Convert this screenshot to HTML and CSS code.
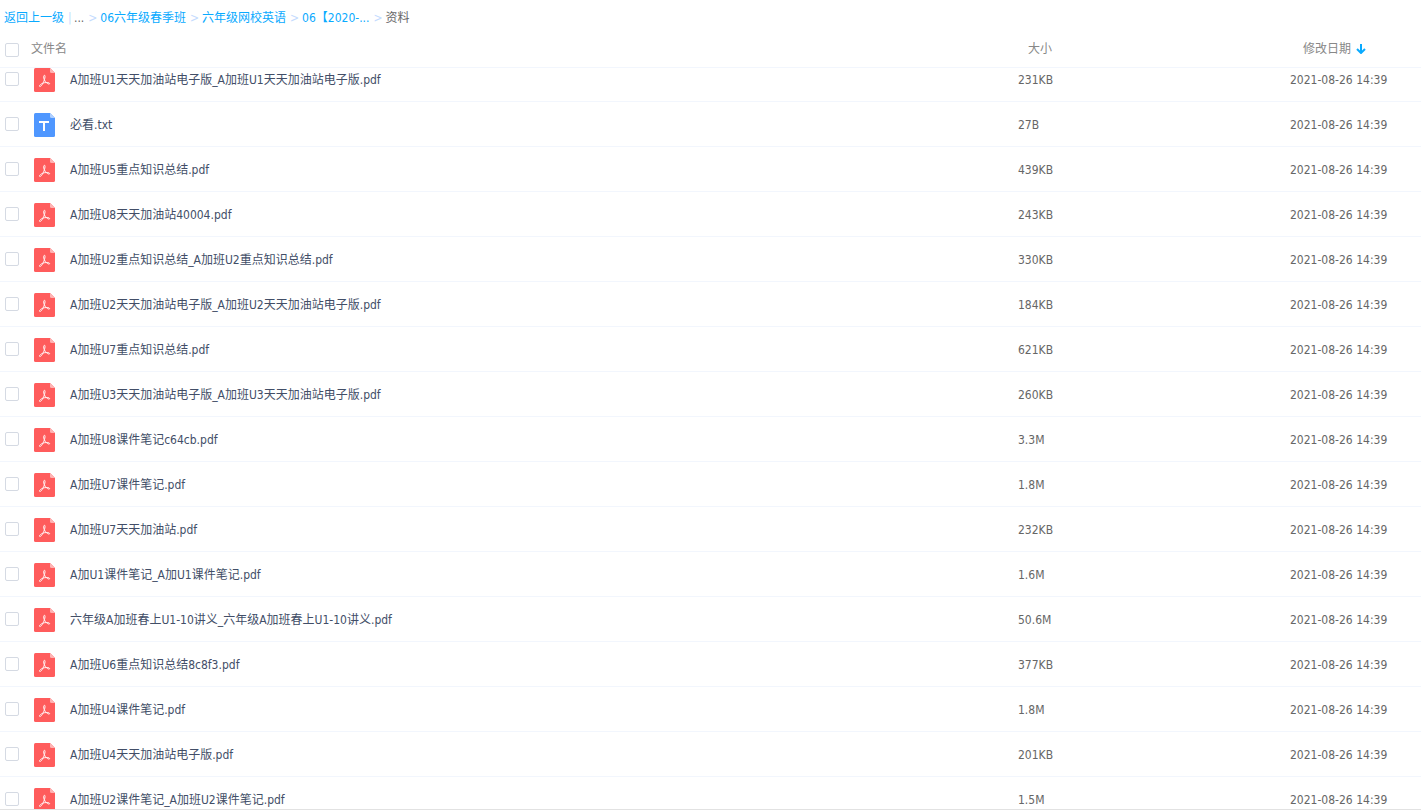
FILE: index.html
```html
<!DOCTYPE html>
<html lang="zh-CN">
<head>
<meta charset="utf-8">
<title>资料</title>
<link rel="stylesheet" href="styles.css">
</head>
<body>
<svg class="sprite" aria-hidden="true">
  <symbol id="pdf" viewBox="0 0 21 24">
    <path d="M1.500 0H16L21 5V22.500Q21 24 19.500 24H1.500Q0 24 0 22.500V1.500Q0 0 1.500 0Z" fill="#ff5c5c"/>
    <path d="M16 0L21 5H17.500Q16 5 16 3.500Z" fill="#ffb4b4"/>
    <path d="M10 7.500C11.500 6.500 11.200 9.500 10.300 12C9.300 15 7.500 18.500 5.900 18.500C4.500 18.300 6.500 15.900 9.200 15C12 14.200 15.800 14.400 15.600 15.700C15.300 16.900 12.500 15.300 11 13C9.900 11.300 9 8.300 10 7.500Z" fill="none" stroke="#fff" stroke-width="0.900"/>
  </symbol>
  <symbol id="txt" viewBox="0 0 21 24">
    <path d="M1.500 0H16L21 5V22.500Q21 24 19.500 24H1.500Q0 24 0 22.500V1.500Q0 0 1.500 0Z" fill="#4f97ff"/>
    <path d="M16 0L21 5H17.500Q16 5 16 3.500Z" fill="#b0d0ff"/>
    <path d="M5 8H15V10H11V18H9V10H5Z" fill="#fff"/>
  </symbol>
</svg>
<main class="page">
  <nav class="crumbs">
    <a href="#">返回上一级</a><span class="bar">|</span><span>...</span><span class="sep">&gt;</span><a href="#">06六年级春季班</a><span class="sep">&gt;</span><a href="#">六年级网校英语</a><span class="sep">&gt;</span><a href="#">06【2020-...</a><span class="sep">&gt;</span><span>资料</span>
  </nav>
  <div class="list">
    <table class="files">
      <colgroup><col class="col-check"><col><col class="col-size"><col class="col-date"></colgroup>
      <thead>
        <tr><th class="check"><input type="checkbox" aria-label="全选"></th><th>文件名</th><th class="head-size">大小</th><th class="head-date"><button class="sort">修改日期<svg class="arrow" viewBox="0 0 10 10" aria-hidden="true"><path d="M5 0V8M1 5L5 9L9 5" fill="none" stroke="#09aaff" stroke-width="2"/></svg></button></th></tr>
      </thead>
      <tbody>
        <tr class="first"><td class="check"><input type="checkbox" id="f1"></td><td><label class="name" for="f1"><svg class="icon"><use href="#pdf"/></svg>A加班U1天天加油站电子版_A加班U1天天加油站电子版.pdf</label></td><td>231KB</td><td>2021-08-26 14:39</td></tr>
        <tr><td class="check"><input type="checkbox" id="f2"></td><td><label class="name" for="f2"><svg class="icon"><use href="#txt"/></svg>必看.txt</label></td><td>27B</td><td>2021-08-26 14:39</td></tr>
        <tr><td class="check"><input type="checkbox" id="f3"></td><td><label class="name" for="f3"><svg class="icon"><use href="#pdf"/></svg>A加班U5重点知识总结.pdf</label></td><td>439KB</td><td>2021-08-26 14:39</td></tr>
        <tr><td class="check"><input type="checkbox" id="f4"></td><td><label class="name" for="f4"><svg class="icon"><use href="#pdf"/></svg>A加班U8天天加油站40004.pdf</label></td><td>243KB</td><td>2021-08-26 14:39</td></tr>
        <tr><td class="check"><input type="checkbox" id="f5"></td><td><label class="name" for="f5"><svg class="icon"><use href="#pdf"/></svg>A加班U2重点知识总结_A加班U2重点知识总结.pdf</label></td><td>330KB</td><td>2021-08-26 14:39</td></tr>
        <tr><td class="check"><input type="checkbox" id="f6"></td><td><label class="name" for="f6"><svg class="icon"><use href="#pdf"/></svg>A加班U2天天加油站电子版_A加班U2天天加油站电子版.pdf</label></td><td>184KB</td><td>2021-08-26 14:39</td></tr>
        <tr><td class="check"><input type="checkbox" id="f7"></td><td><label class="name" for="f7"><svg class="icon"><use href="#pdf"/></svg>A加班U7重点知识总结.pdf</label></td><td>621KB</td><td>2021-08-26 14:39</td></tr>
        <tr><td class="check"><input type="checkbox" id="f8"></td><td><label class="name" for="f8"><svg class="icon"><use href="#pdf"/></svg>A加班U3天天加油站电子版_A加班U3天天加油站电子版.pdf</label></td><td>260KB</td><td>2021-08-26 14:39</td></tr>
        <tr><td class="check"><input type="checkbox" id="f9"></td><td><label class="name" for="f9"><svg class="icon"><use href="#pdf"/></svg>A加班U8课件笔记c64cb.pdf</label></td><td>3.3M</td><td>2021-08-26 14:39</td></tr>
        <tr><td class="check"><input type="checkbox" id="f10"></td><td><label class="name" for="f10"><svg class="icon"><use href="#pdf"/></svg>A加班U7课件笔记.pdf</label></td><td>1.8M</td><td>2021-08-26 14:39</td></tr>
        <tr><td class="check"><input type="checkbox" id="f11"></td><td><label class="name" for="f11"><svg class="icon"><use href="#pdf"/></svg>A加班U7天天加油站.pdf</label></td><td>232KB</td><td>2021-08-26 14:39</td></tr>
        <tr><td class="check"><input type="checkbox" id="f12"></td><td><label class="name" for="f12"><svg class="icon"><use href="#pdf"/></svg>A加U1课件笔记_A加U1课件笔记.pdf</label></td><td>1.6M</td><td>2021-08-26 14:39</td></tr>
        <tr><td class="check"><input type="checkbox" id="f13"></td><td><label class="name" for="f13"><svg class="icon"><use href="#pdf"/></svg>六年级A加班春上U1-10讲义_六年级A加班春上U1-10讲义.pdf</label></td><td>50.6M</td><td>2021-08-26 14:39</td></tr>
        <tr><td class="check"><input type="checkbox" id="f14"></td><td><label class="name" for="f14"><svg class="icon"><use href="#pdf"/></svg>A加班U6重点知识总结8c8f3.pdf</label></td><td>377KB</td><td>2021-08-26 14:39</td></tr>
        <tr><td class="check"><input type="checkbox" id="f15"></td><td><label class="name" for="f15"><svg class="icon"><use href="#pdf"/></svg>A加班U4课件笔记.pdf</label></td><td>1.8M</td><td>2021-08-26 14:39</td></tr>
        <tr><td class="check"><input type="checkbox" id="f16"></td><td><label class="name" for="f16"><svg class="icon"><use href="#pdf"/></svg>A加班U4天天加油站电子版.pdf</label></td><td>201KB</td><td>2021-08-26 14:39</td></tr>
        <tr><td class="check"><input type="checkbox" id="f17"></td><td><label class="name" for="f17"><svg class="icon"><use href="#pdf"/></svg>A加班U2课件笔记_A加班U2课件笔记.pdf</label></td><td>1.5M</td><td>2021-08-26 14:39</td></tr>
      </tbody>
    </table>
  </div>
</main>
</body>
</html>
```
FILE: styles.css
```css
* { box-sizing: border-box; }
body {
  margin: 0;
  background: #fff;
  color: #666;
  font: 12px/16px "DejaVu Sans Condensed", "Noto Sans CJK SC", sans-serif;
}
.sprite { position: absolute; width: 0; height: 0; }
.page {
  display: flex;
  flex-direction: column;
  height: 100vh;
  padding-bottom: 1px;
}
.crumbs {
  display: flex;
  flex: none;
  gap: 4px;
  align-items: center;
  height: 34px;
  padding: 2px 0 0 4px;
  white-space: nowrap;
}
.crumbs a { color: #09aaff; text-decoration: none; }
.crumbs .sep { width: 8px; color: #c4dbfe; }
.crumbs .bar { width: 2px; color: #c4dbfe; }
.list {
  flex: 1;
  min-height: 0;
  overflow: hidden;
  border-bottom: 1px solid #e2e2e2;
}
.files {
  width: 100%;
  table-layout: fixed;
  border-spacing: 0;
}
.col-check { width: 31px; }
.col-size { width: 272px; }
.col-date { width: 131px; }
th, td {
  padding: 0;
  border-bottom: 1px solid #f2f6fd;
  text-align: left;
  white-space: nowrap;
}
th { height: 34px; padding-bottom: 4px; color: #888; font-weight: normal; }
th.check { padding-bottom: 2px; }
td { height: 45px; padding-top: 2px; }
td.check { padding-top: 0; }
.first td { height: 34px; padding: 0 0 9px; }
.first td.check { padding-bottom: 11px; }
th.head-size { padding-left: 10px; }
th.head-date { padding-left: 13px; }
.sort {
  display: flex;
  gap: 5px;
  align-items: center;
  padding: 0;
  border: 0;
  background: none;
  color: inherit;
  font: inherit;
}
.arrow { width: 10px; height: 10px; }
input {
  display: block;
  appearance: none;
  width: 14px;
  height: 14px;
  margin: 0 0 0 5px;
  border: 1px solid #d5dae3;
  border-radius: 2px;
  background: #fff;
}
.name {
  display: flex;
  gap: 15px;
  align-items: center;
  padding-left: 3px;
  color: #424e67;
}
.icon { flex: none; width: 21px; height: 24px; }
```
